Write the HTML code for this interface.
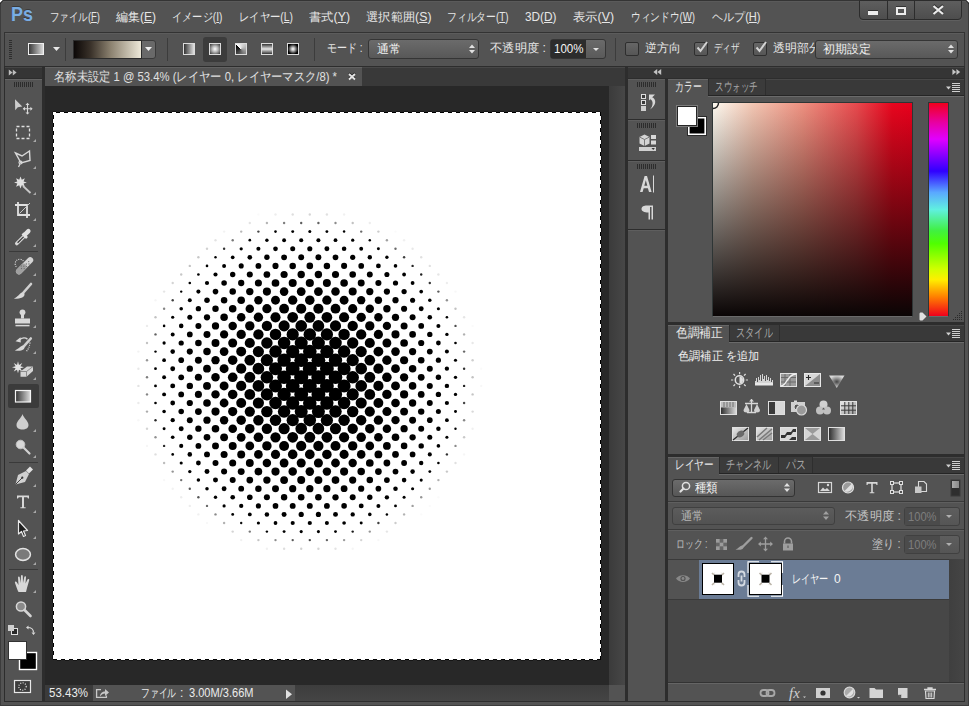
<!DOCTYPE html>
<html><head><meta charset="utf-8">
<style>
*{box-sizing:border-box;margin:0;padding:0}
html,body{width:969px;height:706px;overflow:hidden;background:#535353}
body{position:relative;font-family:"Liberation Sans",sans-serif;font-size:12px;color:#e6e6e6}
.a{position:absolute}
.t{position:absolute;white-space:nowrap;line-height:14px}
.u{text-decoration:underline}
</style></head><body>
<!-- window frame -->
<div class="a" style="left:0;top:0;width:969px;height:706px;background:#535353"></div>
<div class="a" style="left:0;top:0;width:1px;height:706px;background:#3c3c3c"></div>
<div class="a" style="left:968px;top:0;width:1px;height:706px;background:#3c3c3c"></div>
<div class="a" style="left:0;top:705px;width:969px;height:1px;background:#3c3c3c"></div>
<div class="a" style="left:0;top:0;width:969px;height:1px;background:#343434"></div>
<div class="a" style="left:2px;top:1px;width:965px;height:1px;background:#5a5a5a"></div>
<svg class="a" style="left:0;top:0" width="6" height="6"><path d="M0 0H3V1H2V2H1V3H0Z" fill="#fff"/><path d="M3 0.5H2.5V1.5H1.5V2.5H0.5V4" fill="none" stroke="#2a2a2a"/></svg>
<svg class="a" style="left:963px;top:0" width="6" height="6"><path d="M6 0H3V1H4V2H5V3H6Z" fill="#fff"/><path d="M3 0.5H3.5V1.5H4.5V2.5H5.5V4" fill="none" stroke="#2a2a2a"/></svg>

<!-- menu bar -->
<div class="t" style="left:11px;top:3px;font-size:21px;font-weight:bold;color:#79ade4;line-height:21px;text-shadow:0 -1px 0 #3a3a3a;transform:scaleX(0.8564);transform-origin:0 0">Ps</div>
<div class="t" style="left:50px;top:10px;transform:scaleX(0.7893);transform-origin:0 0">ファイル(<span class="u">F</span>)</div>
<div class="t" style="left:116px;top:10px;transform:scaleX(0.9996);transform-origin:0 0">編集(<span class="u">E</span>)</div>
<div class="t" style="left:172px;top:10px;transform:scaleX(0.8510);transform-origin:0 0">イメージ(<span class="u">I</span>)</div>
<div class="t" style="left:239px;top:10px;transform:scaleX(0.8614);transform-origin:0 0">レイヤー(<span class="u">L</span>)</div>
<div class="t" style="left:309px;top:10px;transform:scaleX(1.0246);transform-origin:0 0">書式(<span class="u">Y</span>)</div>
<div class="t" style="left:366px;top:10px;transform:scaleX(1.0232);transform-origin:0 0">選択範囲(<span class="u">S</span>)</div>
<div class="t" style="left:447px;top:10px;transform:scaleX(0.8163);transform-origin:0 0">フィルター(<span class="u">T</span>)</div>
<div class="t" style="left:525px;top:10px;transform:scaleX(0.9839);transform-origin:0 0">3D(<span class="u">D</span>)</div>
<div class="t" style="left:573px;top:10px;transform:scaleX(1.0246);transform-origin:0 0">表示(<span class="u">V</span>)</div>
<div class="t" style="left:631px;top:10px;transform:scaleX(0.8068);transform-origin:0 0">ウィンドウ(<span class="u">W</span>)</div>
<div class="t" style="left:712px;top:10px;transform:scaleX(0.9208);transform-origin:0 0">ヘルプ(<span class="u">H</span>)</div>


<!-- window buttons -->
<div class="a" style="left:859px;top:0px;width:103px;height:20px;border:1px solid #2c2c2c;border-radius:0 0 4px 4px;background:linear-gradient(#5e5e5e,#4d4d4d);box-shadow:0 1px 0 #5f5f5f"></div>
<div class="a" style="left:887px;top:0;width:1px;height:19px;background:#2c2c2c"></div>
<div class="a" style="left:914px;top:0;width:1px;height:19px;background:#2c2c2c"></div>
<div class="a" style="left:868px;top:11px;width:10px;height:4px;background:#ececec;box-shadow:0 -1px 0 #333"></div>
<div class="a" style="left:896px;top:7px;width:10px;height:8px;border:2px solid #ececec;box-shadow:0 -1px 0 #333"></div>
<svg class="a" style="left:931px;top:4px" width="14" height="11" viewBox="-0.5 -0.5 14 11"><path d="M2 1.5 L11.5 9.5 M11.5 1.5 L2 9.5" stroke="#333" stroke-width="2.4" transform="translate(0,-1)"/><path d="M2 1.5 L11.5 9.5 M11.5 1.5 L2 9.5" stroke="#ececec" stroke-width="2.2"/></svg>

<!-- options bar -->
<div class="a" style="left:4px;top:32px;width:961px;height:35px;background:#535353;border:1px solid #333"></div>
<div class="a" style="left:5px;top:33px;width:959px;height:1px;background:#5c5c5c"></div>
<!-- grip -->
<div class="a" style="left:9px;top:40px;width:3px;height:20px;background:repeating-linear-gradient(#2e2e2e 0 1px,transparent 1px 2px)"></div>
<!-- tool icon -->
<div class="a" style="left:28px;top:43px;width:16px;height:12px;border:1px solid #f0f0f0;background:linear-gradient(90deg,#3a3a3a,#d8d8d8)"></div>
<svg class="a" style="left:53px;top:47px" width="7" height="4"><path d="M0 0H7L3.5 4Z" fill="#e8e8e8"/></svg>
<div class="a" style="left:65px;top:38px;width:1px;height:23px;background:#3c3c3c"></div>
<!-- gradient swatch -->
<div class="a" style="left:73px;top:40px;width:83px;height:19px;border-radius:3px;background:#696969;border:1px solid #3a3a3a"></div>
<div class="a" style="left:73px;top:40px;width:69px;height:19px;border:1px solid #2c2c2c;background:linear-gradient(90deg,#0c0807,#3a322a 25%,#8c8270 55%,#ede8d8 100%)"></div>
<svg class="a" style="left:145px;top:47px" width="7" height="4"><path d="M0 0H7L3.5 4Z" fill="#f0f0f0"/></svg>
<div class="a" style="left:167px;top:38px;width:1px;height:23px;background:#3c3c3c"></div>
<!-- gradient type buttons -->
<div class="a" style="left:203px;top:37px;width:24px;height:25px;border-radius:3px;background:#3c3c3c"></div>
<div class="a" style="left:183px;top:43px;width:12px;height:12px;border:1px solid #dcdcdc;background:linear-gradient(90deg,#333,#e0e0e0)"></div>
<div class="a" style="left:209px;top:43px;width:12px;height:12px;border:1px solid #dcdcdc;background:radial-gradient(circle at 50% 50%,#fff 0,#bbb 40%,#333 100%)"></div>
<div class="a" style="left:235px;top:43px;width:12px;height:12px;border:1px solid #dcdcdc;background:conic-gradient(from 315deg,#fafafa,#c8c8c8 25%,#888 50%,#333 80%,#000)"></div>
<div class="a" style="left:261px;top:43px;width:12px;height:12px;border:1px solid #dcdcdc;background:linear-gradient(#333,#e8e8e8 50%,#333)"></div>
<div class="a" style="left:287px;top:43px;width:12px;height:12px;border:1px solid #dcdcdc;background:conic-gradient(from 45deg,#000,#000),radial-gradient(circle,#fff 0,#888 30%,#111 70%);background:radial-gradient(circle,#fff 0,#bbb 25%,#333 60%,#000 75%)"></div>
<div class="a" style="left:314px;top:38px;width:1px;height:23px;background:#3c3c3c"></div>
<!-- mode -->
<div class="t" style="left:327px;top:41px;transform:scaleX(0.8319);transform-origin:0 0">モード :</div>
<div class="a" style="left:368px;top:39px;width:111px;height:20px;border:1px solid #353535;border-radius:3px;background:linear-gradient(#6b6b6b,#585858)"></div>
<div class="t" style="left:377px;top:42px;color:#f0f0f0;transform:scaleX(1.0000);transform-origin:0 0">通常</div>
<svg class="a" style="left:469px;top:44px" width="6" height="10"><path d="M0 4L3 0.5L6 4ZM0 6L3 9.5L6 6Z" fill="#e0e0e0"/></svg>
<div class="t" style="left:490px;top:41px;transform:scaleX(1.0243);transform-origin:0 0">不透明度 :</div>
<div class="a" style="left:550px;top:39px;width:56px;height:20px;border:1px solid #353535;border-radius:3px;background:linear-gradient(#6a6a6a,#5a5a5a)"></div>
<div class="a" style="left:551px;top:40px;width:35px;height:18px;background:#2c2c2c"></div>
<div class="t" style="left:554px;top:42px;color:#f4f4f4;transform:scaleX(0.9608);transform-origin:0 0">100%</div>
<svg class="a" style="left:593px;top:48px" width="6" height="3"><path d="M0 0H6L3 3Z" fill="#e0e0e0"/></svg>
<div class="a" style="left:615px;top:38px;width:1px;height:23px;background:#3c3c3c"></div>
<!-- checkboxes -->
<div class="a" style="left:625px;top:42px;width:14px;height:14px;border:1px solid #2e2e2e;border-radius:2px;background:linear-gradient(#666,#565656)"></div>
<div class="t" style="left:645px;top:41px;transform:scaleX(0.9861);transform-origin:0 0">逆方向</div>
<div class="a" style="left:694px;top:42px;width:14px;height:14px;border:1px solid #2e2e2e;border-radius:2px;background:linear-gradient(#666,#565656)"></div>
<svg class="a" style="left:695px;top:40px" width="14" height="14"><path d="M2.5 7.5L5.5 11L12 2" fill="none" stroke="#d4d4d4" stroke-width="2"/></svg>
<div class="t" style="left:714px;top:41px;transform:scaleX(0.7083);transform-origin:0 0">ディザ</div>
<div class="a" style="left:753px;top:42px;width:14px;height:14px;border:1px solid #2e2e2e;border-radius:2px;background:linear-gradient(#666,#565656)"></div>
<svg class="a" style="left:754px;top:40px" width="14" height="14"><path d="M2.5 7.5L5.5 11L12 2" fill="none" stroke="#d4d4d4" stroke-width="2"/></svg>
<div class="a" style="left:773px;top:38px;width:42px;height:22px;overflow:hidden"><div class="t" style="left:0;top:3px">透明部分</div></div>
<div class="a" style="left:815px;top:40px;width:143px;height:19px;border:1px solid #353535;border-radius:3px;background:linear-gradient(#6b6b6b,#585858)"></div>
<div class="t" style="left:823px;top:42px;color:#f0f0f0;transform:scaleX(1.0000);transform-origin:0 0">初期設定</div>
<svg class="a" style="left:948px;top:44px" width="6" height="10"><path d="M0 4L3 0.5L6 4ZM0 6L3 9.5L6 6Z" fill="#e0e0e0"/></svg>

<!-- left toolbar -->
<div class="a" style="left:4px;top:66px;width:40px;height:636px;background:#2d2d2d"></div>
<div class="a" style="left:5px;top:67px;width:37px;height:11px;background:#353535;border-top:1px solid #454545"></div>
<div class="a" style="left:5px;top:79px;width:37px;height:622px;background:#535353;border-top:1px solid #656565"></div>
<svg class="a" style="left:0;top:0" width="45" height="706">
<g fill="#bdbdbd"><path d="M8.8 69.5L12.6 72.5L8.8 75.5Z M12.8 69.5L16.6 72.5L12.8 75.5Z"/></g>
<g fill="#2c2c2c"><path d="M14 82h1v5h-1zM16 82h1v5h-1zM18 82h1v5h-1zM20 82h1v5h-1zM22 82h1v5h-1zM24 82h1v5h-1zM26 82h1v5h-1zM28 82h1v5h-1zM30 82h1v5h-1zM32 82h1v5h-1z"/></g>
<!-- tiny triangles -->
<g fill="#a8a8a8">
<path d="M36 139v3h-3z"/><path d="M36 166v3h-3z"/><path d="M36 192v3h-3z"/><path d="M36 218v3h-3z"/><path d="M36 244v3h-3z"/>
<path d="M36 273v3h-3z"/><path d="M36 299v3h-3z"/><path d="M36 325v3h-3z"/><path d="M36 351v3h-3z"/><path d="M36 377v3h-3z"/>
<path d="M36 403v3h-3z"/><path d="M36 429v3h-3z"/><path d="M36 455v3h-3z"/><path d="M36 484v3h-3z"/><path d="M36 510v3h-3z"/>
<path d="M36 536v3h-3z"/><path d="M36 562v3h-3z"/><path d="M36 590v3h-3z"/>
</g>
<!-- separators -->
<g fill="#3a3a3a"><rect x="9" y="251" width="29" height="1"/><rect x="9" y="462" width="29" height="1"/><rect x="9" y="569" width="29" height="1"/></g>
<!-- move -->
<path d="M15 99.3L22.3 106.6L17.8 107.2L15.2 110.2Z" fill="#cdcdcd"/>
<path d="M27.5 104.5v8.5M23.2 108.7h8.5" stroke="#d8d8d8" stroke-width="1.1"/>
<path d="M27.5 102.8l-2 2.2h4zM27.5 114.6l-2-2.2h4zM22.8 108.7l2.2-2v4zM32.6 108.7l-2.2-2v4z" fill="#d8d8d8"/>
<!-- marquee -->
<rect x="16.5" y="126.5" width="13" height="12" fill="none" stroke="#e0e0e0" stroke-width="1.3" stroke-dasharray="3 2"/>
<!-- lasso -->
<path d="M15.5 153 L22 156 L29.5 151 L30 160.5 L21 163 Z" fill="none" stroke="#d8d8d8" stroke-width="1.4"/>
<circle cx="20.5" cy="162.5" r="1.5" fill="none" stroke="#d8d8d8" stroke-width="1.2"/>
<path d="M20 164l-1.5 3" stroke="#d8d8d8" stroke-width="1.2"/>
<!-- magic wand -->
<path d="M20.5 176.5l1.3 3.2 3-1.4-1.2 3.2 3.3 1-3.3 1.1 1.2 3.1-3-1.4-1.3 3.3-1.3-3.3-3.1 1.4 1.2-3.1-3.3-1.1 3.3-1-1.2-3.2 3.1 1.4z" fill="#e0e0e0"/>
<path d="M23 186 L30.5 193" stroke="#c8c8c8" stroke-width="1.8"/>
<!-- crop -->
<path d="M18 202v13h12M15 205h12v13" fill="none" stroke="#e0e0e0" stroke-width="1.8"/>
<path d="M19.5 213.5L30 203" stroke="#c8c8c8" stroke-width="1"/>
<!-- eyedropper -->
<path d="M16.8 243.6l7.6-7.6" stroke="#d8d8d8" stroke-width="3.6" stroke-linecap="round"/>
<path d="M17.6 242.8l6.2-6.2" stroke="#3c3c3c" stroke-width="1.3"/>
<path d="M22.5 233.5l4.5 4.5" stroke="#e0e0e0" stroke-width="2.6"/>
<path d="M25 234.5l3.4-3.4" stroke="#e0e0e0" stroke-width="4.4" stroke-linecap="round"/>
<!-- healing -->
<path d="M16.3 266.7 A4.5 4.5 0 1 1 23.4 261.2" fill="none" stroke="#f0f0f0" stroke-width="1.1" stroke-dasharray="0.9 1.3"/>
<path d="M19 271.3 L30.2 260.2" stroke="#d4d4d4" stroke-width="6" stroke-linecap="round"/>
<path d="M19 271.3 L23.5 266.8" stroke="#a0a0a0" stroke-width="6" stroke-linecap="round"/>
<g fill="#6e6e6e"><circle cx="21.5" cy="268.5" r=".65"/><circle cx="23.8" cy="266.2" r=".65"/><circle cx="24.2" cy="268.6" r=".65"/><circle cx="26.3" cy="264" r=".65"/><circle cx="26.6" cy="266.3" r=".65"/><circle cx="28.7" cy="261.6" r=".65"/><circle cx="29" cy="264" r=".65"/><circle cx="21.2" cy="266" r=".65"/></g>
<!-- brush -->
<path d="M23.5 292.5 L31 284" stroke="#d0d0d0" stroke-width="2.6" stroke-linecap="round"/>
<path d="M13.8 298.4 C17.5 297.5 19.5 293.2 22.3 292.2 C24.8 292 25.2 295 23.6 296.6 C21.5 298.6 17.5 299 13.8 298.4Z" fill="#d8d8d8"/>
<!-- stamp -->
<circle cx="22.5" cy="312.3" r="2.9" fill="#d8d8d8"/>
<path d="M21 313h3v5.5h-3z" fill="#d8d8d8"/>
<path d="M15 318.5h15v5h-15z" fill="#d8d8d8"/>
<path d="M15.5 325.6h14" stroke="#d8d8d8" stroke-width="1.5"/>
<!-- history brush -->
<path d="M19 340.2 C22 337.5 25.5 337.5 27.5 339.2" fill="none" stroke="#d8d8d8" stroke-width="1.5"/>
<path d="M15.5 341.2 L20.5 337.2 L20.8 342.5Z" fill="#d8d8d8"/>
<path d="M23.8 346.3 L30.8 338.5" stroke="#d0d0d0" stroke-width="2.6" stroke-linecap="round"/>
<path d="M14.8 350.4 C18 349.6 20 346.4 22.6 345.6 C24.8 345.5 25 348.4 23.4 349.6 C21.2 351 18 351.2 14.8 350.4Z" fill="#d8d8d8"/>
<path d="M30 342.5 C29.5 346.5 28.5 349 26.5 351.2" fill="none" stroke="#f0f0f0" stroke-width="1.1" stroke-dasharray="1 1.1"/>
<!-- eraser -->
<path d="M18.00 361.30 L18.99 364.90 L22.24 363.06 L20.40 366.31 L24.00 367.30 L20.40 368.29 L22.24 371.54 L18.99 369.70 L18.00 373.30 L17.01 369.70 L13.76 371.54 L15.60 368.29 L12.00 367.30 L15.60 366.31 L13.76 363.06 L17.01 364.90Z" fill="#e4e4e4"/>
<path d="M20.5 371.5 L27 366.5 L33 366.5 L33 371 L26.5 376.8 L20.5 376.8Z" fill="#d4d4d4"/>
<path d="M20.5 371.5 L26.5 371.5 L33 366.5 M26.5 371.5 V376.8" fill="none" stroke="#7a7a7a" stroke-width=".8"/>
<!-- gradient selected -->
<rect x="8" y="384" width="31" height="24" rx="2" fill="#3b3b3b"/>
<rect x="15.5" y="390.5" width="15" height="11.5" fill="url(#tg)" stroke="#f4f4f4" stroke-width="1.2"/>
<defs><linearGradient id="tg"><stop offset="0" stop-color="#333"/><stop offset="1" stop-color="#ddd"/></linearGradient>
<radialGradient id="rg1" cx=".5" cy=".4" r=".6"><stop offset="0" stop-color="#777"/><stop offset="1" stop-color="#d4d4d4"/></radialGradient></defs>
<!-- blur drop -->
<path d="M22.5 414 C23.5 418 28.5 421 28.5 425 C28.5 428 26 429.5 22.5 429.5 C19 429.5 16.5 428 16.5 425 C16.5 421 21.5 418 22.5 414Z" fill="#cfcfcf"/>
<!-- dodge -->
<circle cx="20.5" cy="444.5" r="4.3" fill="#d8d8d8" stroke="#c0c0c0"/>
<path d="M23.5 447.5 L29.5 453.5" stroke="#d0d0d0" stroke-width="2.2" stroke-linecap="round"/>
<!-- pen -->
<path d="M15.5 484.5 L18 475 L26 471 L29 474 L25 482 Z" fill="#d0d0d0"/>
<path d="M26 470.5 L30 466.5 L33 469.5 L29 473.5Z" fill="#e0e0e0"/>
<path d="M15.5 484.5 L22 478" stroke="#444" stroke-width="1"/>
<circle cx="22.3" cy="477.7" r="1.1" fill="#333"/>
<!-- type -->
<path d="M17 495.5h12v3h-1l-.7-1.2h-3.3v10h1.6v1h-5.2v-1h1.6v-10h-3.3l-.7 1.2h-1z" fill="#d8d8d8"/>
<!-- path select -->
<path d="M18.5 520.5 L18.5 534 L21.5 531.5 L23.5 536.5 L25.5 535.5 L23.5 531 L27.5 530.5Z" fill="#1e1e1e" stroke="#e8e8e8" stroke-width="1.2" stroke-linejoin="round"/>
<!-- ellipse -->
<ellipse cx="23" cy="554.5" rx="7.5" ry="6" fill="url(#rg1)" stroke="#e4e4e4" stroke-width="1.3"/>
<ellipse cx="23" cy="554.5" rx="6.5" ry="5" fill="#7a7a7a"/>
<!-- hand -->
<path d="M17.5 590 L15 583 C14.5 581.5 16 581 16.8 582.2 L18.5 585 L18 577.5 C18 576.3 19.6 576.3 19.8 577.5 L20.5 583 L21 576 C21 574.8 22.8 574.8 22.8 576 L23 583 L24.3 577 C24.5 575.8 26.2 576 26 577.2 L25.5 583.5 L27.5 579.5 C28 578.5 29.6 579 29.2 580.2 L27 588 L26 592 L18.5 592 Z" fill="#d8d8d8"/>
<!-- zoom -->
<circle cx="21" cy="606.5" r="4.6" fill="#8a8a8a" stroke="#d8d8d8" stroke-width="1.5"/>
<path d="M24.5 610 L30.5 616" stroke="#d4d4d4" stroke-width="2.6" stroke-linecap="round"/>
<!-- default colours -->
<rect x="11.5" y="628.5" width="6" height="6" fill="#2a2a2a" stroke="#e0e0e0"/>
<rect x="8" y="625" width="6" height="6" fill="#cfcfcf"/>
<!-- swap -->
<path d="M27.5 627.5 C31 627.5 33.5 629 33.5 632.5" fill="none" stroke="#d8d8d8" stroke-width="1.2"/>
<path d="M26 627.5 L28.5 625.5 L28.5 629.5Z M33.5 635 L31.5 632.5 L35.5 632.5Z" fill="#d8d8d8"/>
<!-- fg/bg -->
<rect x="19.5" y="652.5" width="17" height="17" fill="#000" stroke="#fff" stroke-width="1.4"/>
<rect x="8.5" y="641.5" width="18" height="18" fill="#fff" stroke="#333" stroke-width="1"/>
<!-- quick mask -->
<rect x="14.5" y="680.5" width="16" height="12" fill="#3d3d3d" stroke="#e8e8e8" stroke-width="1.2"/>
<circle cx="22.5" cy="686.5" r="3.7" fill="none" stroke="#f4f4f4" stroke-width="1.1" stroke-dasharray="1 1.45"/>
</svg>

<!-- document area -->
<div class="a" style="left:44px;top:66px;width:584px;height:636px;background:#2d2d2d"></div>
<div class="a" style="left:45px;top:67px;width:580px;height:19px;background:#393939;border-top:1px solid #474747"></div>
<div class="a" style="left:45px;top:67px;width:317px;height:19px;background:#535353;border-top:1px solid #626262"></div>
<div class="t" style="left:54px;top:70px;font-size:13px;color:#e0e0e0;transform:scaleX(0.8681);transform-origin:0 0">名称未設定 1 @ 53.4% (レイヤー 0, レイヤーマスク/8) *</div>
<svg class="a" style="left:347px;top:72px" width="10" height="9"><path d="M2 2L8 7.5M8 2L2 7.5" stroke="#1e1e1e" stroke-width="2.2" transform="translate(0,-0.8)"/><path d="M2 2L8 7.5M8 2L2 7.5" stroke="#e6e6e6" stroke-width="1.8"/></svg>
<div class="a" style="left:45px;top:86px;width:564px;height:599px;background:#282828"></div>
<div class="a" style="left:609px;top:86px;width:16px;height:599px;background:linear-gradient(90deg,#3b3b3b,#474747)"></div>
<div class="a" style="left:45px;top:685px;width:564px;height:16px;background:linear-gradient(#3d3d3d,#454545)"></div>
<div class="a" style="left:609px;top:685px;width:16px;height:16px;background:#535353"></div>
<!-- status bar -->
<div class="a" style="left:45px;top:685px;width:48px;height:16px;background:#3b3b3b"></div>
<div class="a" style="left:93px;top:685px;width:202px;height:16px;background:#535353"></div>
<div class="t" style="left:49px;top:686px;color:#ececec;font-size:12px;transform:scaleX(0.9582);transform-origin:0 0">53.43%</div>
<svg class="a" style="left:95px;top:687px" width="15" height="12"><path d="M6 2.6H1.6V10.4H11.4V8.5" fill="none" stroke="#c8c8c8" stroke-width="1.3"/><path d="M5 9.5C5 6 7.5 4.5 10 4.5V2L14 5.5L10 9V6.5C8 6.5 6.5 7.5 5 9.5Z" fill="#c8c8c8"/></svg>
<div class="t" style="left:141px;top:686px;color:#ececec;font-size:12px;transform:scaleX(0.7292);transform-origin:0 0">ファイル</div><div class="t" style="left:180px;top:686px;color:#ececec;font-size:12px">:</div><div class="t" style="left:189px;top:686px;color:#ececec;font-size:12px;transform:scaleX(0.9208);transform-origin:0 0">3.00M/3.66M</div>
<svg class="a" style="left:285px;top:689px" width="8" height="11"><path d="M1 0.5L7 5.2L1 10Z" fill="#e0e0e0"/></svg>
<!-- canvas -->
<svg class="a" style="left:0;top:0" width="969" height="706">
<rect x="53" y="112" width="548" height="548" fill="#fff"/>
<g fill="#000"><circle cx="138.4" cy="351.6" r="1.2" fill-opacity="0.05"/><circle cx="138.4" cy="368.7" r="1.2" fill-opacity="0.09"/><circle cx="138.4" cy="385.9" r="1.2" fill-opacity="0.11"/><circle cx="138.4" cy="403.0" r="1.2" fill-opacity="0.08"/><circle cx="138.4" cy="420.2" r="1.2" fill-opacity="0.03"/><circle cx="147.0" cy="325.9" r="1.2" fill-opacity="0.08"/><circle cx="147.0" cy="343.0" r="1.2" fill-opacity="0.24"/><circle cx="147.0" cy="360.2" r="1.2" fill-opacity="0.41"/><circle cx="147.0" cy="377.3" r="1.2" fill-opacity="0.51"/><circle cx="147.0" cy="394.4" r="1.2" fill-opacity="0.48"/><circle cx="147.0" cy="411.6" r="1.2" fill-opacity="0.33"/><circle cx="147.0" cy="428.7" r="1.2" fill-opacity="0.17"/><circle cx="147.0" cy="445.9" r="1.2" fill-opacity="0.04"/><circle cx="155.5" cy="300.2" r="1.2" fill-opacity="0.04"/><circle cx="155.5" cy="317.3" r="1.2" fill-opacity="0.24"/><circle cx="155.5" cy="334.4" r="1.2" fill-opacity="0.62"/><circle cx="155.5" cy="351.6" r="1.22"/><circle cx="155.5" cy="368.7" r="1.38"/><circle cx="155.5" cy="385.9" r="1.41"/><circle cx="155.5" cy="403.0" r="1.32"/><circle cx="155.5" cy="420.2" r="1.2" fill-opacity="0.85"/><circle cx="155.5" cy="437.3" r="1.2" fill-opacity="0.43"/><circle cx="155.5" cy="454.4" r="1.2" fill-opacity="0.13"/><circle cx="164.1" cy="291.6" r="1.2" fill-opacity="0.10"/><circle cx="164.1" cy="308.7" r="1.2" fill-opacity="0.48"/><circle cx="164.1" cy="325.9" r="1.28"/><circle cx="164.1" cy="343.0" r="1.63"/><circle cx="164.1" cy="360.2" r="1.86"/><circle cx="164.1" cy="377.3" r="1.95"/><circle cx="164.1" cy="394.4" r="1.93"/><circle cx="164.1" cy="411.6" r="1.77"/><circle cx="164.1" cy="428.7" r="1.49"/><circle cx="164.1" cy="445.9" r="1.2" fill-opacity="0.83"/><circle cx="164.1" cy="463.0" r="1.2" fill-opacity="0.26"/><circle cx="164.1" cy="480.1" r="1.2" fill-opacity="0.03"/><circle cx="172.7" cy="283.0" r="1.2" fill-opacity="0.17"/><circle cx="172.7" cy="300.2" r="1.2" fill-opacity="0.75"/><circle cx="172.7" cy="317.3" r="1.57"/><circle cx="172.7" cy="334.4" r="1.99"/><circle cx="172.7" cy="351.6" r="2.28"/><circle cx="172.7" cy="368.7" r="2.44"/><circle cx="172.7" cy="385.9" r="2.47"/><circle cx="172.7" cy="403.0" r="2.38"/><circle cx="172.7" cy="420.2" r="2.16"/><circle cx="172.7" cy="437.3" r="1.82"/><circle cx="172.7" cy="454.4" r="1.34"/><circle cx="172.7" cy="471.6" r="1.2" fill-opacity="0.42"/><circle cx="172.7" cy="488.7" r="1.2" fill-opacity="0.05"/><circle cx="181.2" cy="274.5" r="1.2" fill-opacity="0.22"/><circle cx="181.2" cy="291.6" r="1.2" fill-opacity="1.00"/><circle cx="181.2" cy="308.7" r="1.80"/><circle cx="181.2" cy="325.9" r="2.28"/><circle cx="181.2" cy="343.0" r="2.62"/><circle cx="181.2" cy="360.2" r="2.83"/><circle cx="181.2" cy="377.3" r="2.89"/><circle cx="181.2" cy="394.4" r="2.87"/><circle cx="181.2" cy="411.6" r="2.76"/><circle cx="181.2" cy="428.7" r="2.48"/><circle cx="181.2" cy="445.9" r="2.08"/><circle cx="181.2" cy="463.0" r="1.54"/><circle cx="181.2" cy="480.1" r="1.2" fill-opacity="0.56"/><circle cx="181.2" cy="497.3" r="1.2" fill-opacity="0.07"/><circle cx="189.8" cy="265.9" r="1.2" fill-opacity="0.24"/><circle cx="189.8" cy="283.0" r="1.30"/><circle cx="189.8" cy="300.2" r="1.96"/><circle cx="189.8" cy="317.3" r="2.50"/><circle cx="189.8" cy="334.4" r="2.87"/><circle cx="189.8" cy="351.6" r="3.05"/><circle cx="189.8" cy="368.7" r="3.17"/><circle cx="189.8" cy="385.9" r="3.20"/><circle cx="189.8" cy="403.0" r="3.12"/><circle cx="189.8" cy="420.2" r="2.98"/><circle cx="189.8" cy="437.3" r="2.74"/><circle cx="189.8" cy="454.4" r="2.28"/><circle cx="189.8" cy="471.6" r="1.68"/><circle cx="189.8" cy="488.7" r="1.2" fill-opacity="0.65"/><circle cx="189.8" cy="505.9" r="1.2" fill-opacity="0.07"/><circle cx="198.4" cy="257.3" r="1.2" fill-opacity="0.22"/><circle cx="198.4" cy="274.5" r="1.33"/><circle cx="198.4" cy="291.6" r="2.06"/><circle cx="198.4" cy="308.7" r="2.66"/><circle cx="198.4" cy="325.9" r="3.01"/><circle cx="198.4" cy="343.0" r="3.28"/><circle cx="198.4" cy="360.2" r="3.48"/><circle cx="198.4" cy="377.3" r="3.57"/><circle cx="198.4" cy="394.4" r="3.54"/><circle cx="198.4" cy="411.6" r="3.40"/><circle cx="198.4" cy="428.7" r="3.16"/><circle cx="198.4" cy="445.9" r="2.89"/><circle cx="198.4" cy="463.0" r="2.41"/><circle cx="198.4" cy="480.1" r="1.75"/><circle cx="198.4" cy="497.3" r="1.2" fill-opacity="0.66"/><circle cx="198.4" cy="514.4" r="1.2" fill-opacity="0.06"/><circle cx="207.0" cy="248.8" r="1.2" fill-opacity="0.18"/><circle cx="207.0" cy="265.9" r="1.31"/><circle cx="207.0" cy="283.0" r="2.10"/><circle cx="207.0" cy="300.2" r="2.76"/><circle cx="207.0" cy="317.3" r="3.12"/><circle cx="207.0" cy="334.4" r="3.49"/><circle cx="207.0" cy="351.6" r="3.75"/><circle cx="207.0" cy="368.7" r="3.89"/><circle cx="207.0" cy="385.9" r="3.92"/><circle cx="207.0" cy="403.0" r="3.83"/><circle cx="207.0" cy="420.2" r="3.63"/><circle cx="207.0" cy="437.3" r="3.33"/><circle cx="207.0" cy="454.4" r="2.97"/><circle cx="207.0" cy="471.6" r="2.48"/><circle cx="207.0" cy="488.7" r="1.76"/><circle cx="207.0" cy="505.9" r="1.2" fill-opacity="0.59"/><circle cx="207.0" cy="523.0" r="1.2" fill-opacity="0.03"/><circle cx="215.5" cy="240.2" r="1.2" fill-opacity="0.11"/><circle cx="215.5" cy="257.3" r="1.22"/><circle cx="215.5" cy="274.5" r="2.07"/><circle cx="215.5" cy="291.6" r="2.80"/><circle cx="215.5" cy="308.7" r="3.21"/><circle cx="215.5" cy="325.9" r="3.65"/><circle cx="215.5" cy="343.0" r="3.97"/><circle cx="215.5" cy="360.2" r="4.16"/><circle cx="215.5" cy="377.3" r="4.23"/><circle cx="215.5" cy="394.4" r="4.20"/><circle cx="215.5" cy="411.6" r="4.05"/><circle cx="215.5" cy="428.7" r="3.80"/><circle cx="215.5" cy="445.9" r="3.45"/><circle cx="215.5" cy="463.0" r="3.01"/><circle cx="215.5" cy="480.1" r="2.49"/><circle cx="215.5" cy="497.3" r="1.70"/><circle cx="215.5" cy="514.4" r="1.2" fill-opacity="0.46"/><circle cx="224.1" cy="231.6" r="1.2" fill-opacity="0.05"/><circle cx="224.1" cy="248.8" r="1.2" fill-opacity="0.80"/><circle cx="224.1" cy="265.9" r="1.99"/><circle cx="224.1" cy="283.0" r="2.78"/><circle cx="224.1" cy="300.2" r="3.25"/><circle cx="224.1" cy="317.3" r="3.75"/><circle cx="224.1" cy="334.4" r="4.13"/><circle cx="224.1" cy="351.6" r="4.35"/><circle cx="224.1" cy="368.7" r="4.47"/><circle cx="224.1" cy="385.9" r="4.49"/><circle cx="224.1" cy="403.0" r="4.40"/><circle cx="224.1" cy="420.2" r="4.22"/><circle cx="224.1" cy="437.3" r="3.92"/><circle cx="224.1" cy="454.4" r="3.51"/><circle cx="224.1" cy="471.6" r="3.02"/><circle cx="224.1" cy="488.7" r="2.44"/><circle cx="224.1" cy="505.9" r="1.59"/><circle cx="224.1" cy="523.0" r="1.2" fill-opacity="0.30"/><circle cx="232.7" cy="240.2" r="1.2" fill-opacity="0.53"/><circle cx="232.7" cy="257.3" r="1.84"/><circle cx="232.7" cy="274.5" r="2.69"/><circle cx="232.7" cy="291.6" r="3.23"/><circle cx="232.7" cy="308.7" r="3.79"/><circle cx="232.7" cy="325.9" r="4.23"/><circle cx="232.7" cy="343.0" r="4.51"/><circle cx="232.7" cy="360.2" r="4.74"/><circle cx="232.7" cy="377.3" r="4.82"/><circle cx="232.7" cy="394.4" r="4.76"/><circle cx="232.7" cy="411.6" r="4.58"/><circle cx="232.7" cy="428.7" r="4.32"/><circle cx="232.7" cy="445.9" r="3.98"/><circle cx="232.7" cy="463.0" r="3.51"/><circle cx="232.7" cy="480.1" r="2.99"/><circle cx="232.7" cy="497.3" r="2.32"/><circle cx="232.7" cy="514.4" r="1.41"/><circle cx="232.7" cy="531.6" r="1.2" fill-opacity="0.17"/><circle cx="241.2" cy="231.6" r="1.2" fill-opacity="0.28"/><circle cx="241.2" cy="248.8" r="1.62"/><circle cx="241.2" cy="265.9" r="2.54"/><circle cx="241.2" cy="283.0" r="3.15"/><circle cx="241.2" cy="300.2" r="3.78"/><circle cx="241.2" cy="317.3" r="4.27"/><circle cx="241.2" cy="334.4" r="4.64"/><circle cx="241.2" cy="351.6" r="4.95"/><circle cx="241.2" cy="368.7" r="5.11"/><circle cx="241.2" cy="385.9" r="5.11"/><circle cx="241.2" cy="403.0" r="4.97"/><circle cx="241.2" cy="420.2" r="4.71"/><circle cx="241.2" cy="437.3" r="4.37"/><circle cx="241.2" cy="454.4" r="3.98"/><circle cx="241.2" cy="471.6" r="3.47"/><circle cx="241.2" cy="488.7" r="2.91"/><circle cx="241.2" cy="505.9" r="2.14"/><circle cx="241.2" cy="523.0" r="1.2" fill-opacity="0.95"/><circle cx="241.2" cy="540.1" r="1.2" fill-opacity="0.06"/><circle cx="249.8" cy="223.0" r="1.2" fill-opacity="0.11"/><circle cx="249.8" cy="240.2" r="1.34"/><circle cx="249.8" cy="257.3" r="2.33"/><circle cx="249.8" cy="274.5" r="3.03"/><circle cx="249.8" cy="291.6" r="3.69"/><circle cx="249.8" cy="308.7" r="4.26"/><circle cx="249.8" cy="325.9" r="4.70"/><circle cx="249.8" cy="343.0" r="5.09"/><circle cx="249.8" cy="360.2" r="5.36"/><circle cx="249.8" cy="377.3" r="5.45"/><circle cx="249.8" cy="394.4" r="5.36"/><circle cx="249.8" cy="411.6" r="5.12"/><circle cx="249.8" cy="428.7" r="4.78"/><circle cx="249.8" cy="445.9" r="4.37"/><circle cx="249.8" cy="463.0" r="3.94"/><circle cx="249.8" cy="480.1" r="3.37"/><circle cx="249.8" cy="497.3" r="2.80"/><circle cx="249.8" cy="514.4" r="1.90"/><circle cx="249.8" cy="531.6" r="1.2" fill-opacity="0.53"/><circle cx="258.4" cy="214.5" r="1.2" fill-opacity="0.02"/><circle cx="258.4" cy="231.6" r="1.2" fill-opacity="0.71"/><circle cx="258.4" cy="248.8" r="2.04"/><circle cx="258.4" cy="265.9" r="2.90"/><circle cx="258.4" cy="283.0" r="3.55"/><circle cx="258.4" cy="300.2" r="4.19"/><circle cx="258.4" cy="317.3" r="4.70"/><circle cx="258.4" cy="334.4" r="5.17"/><circle cx="258.4" cy="351.6" r="5.58"/><circle cx="258.4" cy="368.7" r="5.84"/><circle cx="258.4" cy="385.9" r="5.84"/><circle cx="258.4" cy="403.0" r="5.58"/><circle cx="258.4" cy="420.2" r="5.20"/><circle cx="258.4" cy="437.3" r="4.78"/><circle cx="258.4" cy="454.4" r="4.33"/><circle cx="258.4" cy="471.6" r="3.84"/><circle cx="258.4" cy="488.7" r="3.21"/><circle cx="258.4" cy="505.9" r="2.56"/><circle cx="258.4" cy="523.0" r="1.59"/><circle cx="258.4" cy="540.1" r="1.2" fill-opacity="0.23"/><circle cx="266.9" cy="223.0" r="1.2" fill-opacity="0.29"/><circle cx="266.9" cy="240.2" r="1.70"/><circle cx="266.9" cy="257.3" r="2.68"/><circle cx="266.9" cy="274.5" r="3.35"/><circle cx="266.9" cy="291.6" r="4.05"/><circle cx="266.9" cy="308.7" r="4.61"/><circle cx="266.9" cy="325.9" r="5.17"/><circle cx="266.9" cy="343.0" r="5.71"/><circle cx="266.9" cy="360.2" r="6.11"/><circle cx="266.9" cy="377.3" r="6.25"/><circle cx="266.9" cy="394.4" r="6.11"/><circle cx="266.9" cy="411.6" r="5.71"/><circle cx="266.9" cy="428.7" r="5.20"/><circle cx="266.9" cy="445.9" r="4.72"/><circle cx="266.9" cy="463.0" r="4.24"/><circle cx="266.9" cy="480.1" r="3.68"/><circle cx="266.9" cy="497.3" r="3.03"/><circle cx="266.9" cy="514.4" r="2.26"/><circle cx="266.9" cy="531.6" r="1.22"/><circle cx="266.9" cy="548.7" r="1.2" fill-opacity="0.06"/><circle cx="275.5" cy="214.5" r="1.2" fill-opacity="0.07"/><circle cx="275.5" cy="231.6" r="1.30"/><circle cx="275.5" cy="248.8" r="2.35"/><circle cx="275.5" cy="265.9" r="3.09"/><circle cx="275.5" cy="283.0" r="3.86"/><circle cx="275.5" cy="300.2" r="4.46"/><circle cx="275.5" cy="317.3" r="5.08"/><circle cx="275.5" cy="334.4" r="5.71"/><circle cx="275.5" cy="351.6" r="6.25"/><circle cx="275.5" cy="368.7" r="6.51"/><circle cx="275.5" cy="385.9" r="6.51"/><circle cx="275.5" cy="403.0" r="6.25"/><circle cx="275.5" cy="420.2" r="5.71"/><circle cx="275.5" cy="437.3" r="5.13"/><circle cx="275.5" cy="454.4" r="4.59"/><circle cx="275.5" cy="471.6" r="4.09"/><circle cx="275.5" cy="488.7" r="3.47"/><circle cx="275.5" cy="505.9" r="2.84"/><circle cx="275.5" cy="523.0" r="1.89"/><circle cx="275.5" cy="540.1" r="1.2" fill-opacity="0.45"/><circle cx="284.1" cy="223.0" r="1.2" fill-opacity="0.50"/><circle cx="284.1" cy="240.2" r="1.94"/><circle cx="284.1" cy="257.3" r="2.87"/><circle cx="284.1" cy="274.5" r="3.58"/><circle cx="284.1" cy="291.6" r="4.28"/><circle cx="284.1" cy="308.7" r="4.91"/><circle cx="284.1" cy="325.9" r="5.58"/><circle cx="284.1" cy="343.0" r="6.25"/><circle cx="284.1" cy="360.2" r="6.64"/><circle cx="284.1" cy="377.3" r="6.78"/><circle cx="284.1" cy="394.4" r="6.64"/><circle cx="284.1" cy="411.6" r="6.25"/><circle cx="284.1" cy="428.7" r="5.58"/><circle cx="284.1" cy="445.9" r="4.98"/><circle cx="284.1" cy="463.0" r="4.42"/><circle cx="284.1" cy="480.1" r="3.89"/><circle cx="284.1" cy="497.3" r="3.21"/><circle cx="284.1" cy="514.4" r="2.49"/><circle cx="284.1" cy="531.6" r="1.45"/><circle cx="284.1" cy="548.7" r="1.2" fill-opacity="0.13"/><circle cx="292.7" cy="214.5" r="1.2" fill-opacity="0.13"/><circle cx="292.7" cy="231.6" r="1.47"/><circle cx="292.7" cy="248.8" r="2.51"/><circle cx="292.7" cy="265.9" r="3.25"/><circle cx="292.7" cy="283.0" r="4.03"/><circle cx="292.7" cy="300.2" r="4.67"/><circle cx="292.7" cy="317.3" r="5.35"/><circle cx="292.7" cy="334.4" r="6.11"/><circle cx="292.7" cy="351.6" r="6.64"/><circle cx="292.7" cy="368.7" r="6.91"/><circle cx="292.7" cy="385.9" r="6.91"/><circle cx="292.7" cy="403.0" r="6.64"/><circle cx="292.7" cy="420.2" r="6.11"/><circle cx="292.7" cy="437.3" r="5.37"/><circle cx="292.7" cy="454.4" r="4.78"/><circle cx="292.7" cy="471.6" r="4.24"/><circle cx="292.7" cy="488.7" r="3.62"/><circle cx="292.7" cy="505.9" r="2.94"/><circle cx="292.7" cy="523.0" r="2.06"/><circle cx="292.7" cy="540.1" r="1.2" fill-opacity="0.65"/><circle cx="301.2" cy="223.0" r="1.2" fill-opacity="0.63"/><circle cx="301.2" cy="240.2" r="2.05"/><circle cx="301.2" cy="257.3" r="2.94"/><circle cx="301.2" cy="274.5" r="3.70"/><circle cx="301.2" cy="291.6" r="4.39"/><circle cx="301.2" cy="308.7" r="5.07"/><circle cx="301.2" cy="325.9" r="5.84"/><circle cx="301.2" cy="343.0" r="6.51"/><circle cx="301.2" cy="360.2" r="6.91"/><circle cx="301.2" cy="377.3" r="7.01"/><circle cx="301.2" cy="394.4" r="6.91"/><circle cx="301.2" cy="411.6" r="6.51"/><circle cx="301.2" cy="428.7" r="5.84"/><circle cx="301.2" cy="445.9" r="5.13"/><circle cx="301.2" cy="463.0" r="4.53"/><circle cx="301.2" cy="480.1" r="3.98"/><circle cx="301.2" cy="497.3" r="3.30"/><circle cx="301.2" cy="514.4" r="2.60"/><circle cx="301.2" cy="531.6" r="1.56"/><circle cx="301.2" cy="548.7" r="1.2" fill-opacity="0.18"/><circle cx="309.8" cy="214.5" r="1.2" fill-opacity="0.16"/><circle cx="309.8" cy="231.6" r="1.51"/><circle cx="309.8" cy="248.8" r="2.56"/><circle cx="309.8" cy="265.9" r="3.30"/><circle cx="309.8" cy="283.0" r="4.08"/><circle cx="309.8" cy="300.2" r="4.74"/><circle cx="309.8" cy="317.3" r="5.45"/><circle cx="309.8" cy="334.4" r="6.25"/><circle cx="309.8" cy="351.6" r="6.78"/><circle cx="309.8" cy="368.7" r="7.01"/><circle cx="309.8" cy="385.9" r="7.01"/><circle cx="309.8" cy="403.0" r="6.78"/><circle cx="309.8" cy="420.2" r="6.25"/><circle cx="309.8" cy="437.3" r="5.45"/><circle cx="309.8" cy="454.4" r="4.85"/><circle cx="309.8" cy="471.6" r="4.28"/><circle cx="309.8" cy="488.7" r="3.66"/><circle cx="309.8" cy="505.9" r="2.97"/><circle cx="309.8" cy="523.0" r="2.11"/><circle cx="309.8" cy="540.1" r="1.2" fill-opacity="0.71"/><circle cx="318.4" cy="223.0" r="1.2" fill-opacity="0.61"/><circle cx="318.4" cy="240.2" r="2.03"/><circle cx="318.4" cy="257.3" r="2.93"/><circle cx="318.4" cy="274.5" r="3.69"/><circle cx="318.4" cy="291.6" r="4.38"/><circle cx="318.4" cy="308.7" r="5.07"/><circle cx="318.4" cy="325.9" r="5.84"/><circle cx="318.4" cy="343.0" r="6.51"/><circle cx="318.4" cy="360.2" r="6.91"/><circle cx="318.4" cy="377.3" r="7.01"/><circle cx="318.4" cy="394.4" r="6.91"/><circle cx="318.4" cy="411.6" r="6.51"/><circle cx="318.4" cy="428.7" r="5.84"/><circle cx="318.4" cy="445.9" r="5.12"/><circle cx="318.4" cy="463.0" r="4.52"/><circle cx="318.4" cy="480.1" r="3.97"/><circle cx="318.4" cy="497.3" r="3.29"/><circle cx="318.4" cy="514.4" r="2.58"/><circle cx="318.4" cy="531.6" r="1.54"/><circle cx="318.4" cy="548.7" r="1.2" fill-opacity="0.17"/><circle cx="326.9" cy="214.5" r="1.2" fill-opacity="0.12"/><circle cx="326.9" cy="231.6" r="1.43"/><circle cx="326.9" cy="248.8" r="2.48"/><circle cx="326.9" cy="265.9" r="3.23"/><circle cx="326.9" cy="283.0" r="4.01"/><circle cx="326.9" cy="300.2" r="4.66"/><circle cx="326.9" cy="317.3" r="5.35"/><circle cx="326.9" cy="334.4" r="6.11"/><circle cx="326.9" cy="351.6" r="6.64"/><circle cx="326.9" cy="368.7" r="6.91"/><circle cx="326.9" cy="385.9" r="6.91"/><circle cx="326.9" cy="403.0" r="6.64"/><circle cx="326.9" cy="420.2" r="6.11"/><circle cx="326.9" cy="437.3" r="5.36"/><circle cx="326.9" cy="454.4" r="4.77"/><circle cx="326.9" cy="471.6" r="4.22"/><circle cx="326.9" cy="488.7" r="3.59"/><circle cx="326.9" cy="505.9" r="2.92"/><circle cx="326.9" cy="523.0" r="2.02"/><circle cx="326.9" cy="540.1" r="1.2" fill-opacity="0.61"/><circle cx="335.5" cy="223.0" r="1.2" fill-opacity="0.45"/><circle cx="335.5" cy="240.2" r="1.89"/><circle cx="335.5" cy="257.3" r="2.84"/><circle cx="335.5" cy="274.5" r="3.55"/><circle cx="335.5" cy="291.6" r="4.26"/><circle cx="335.5" cy="308.7" r="4.90"/><circle cx="335.5" cy="325.9" r="5.58"/><circle cx="335.5" cy="343.0" r="6.25"/><circle cx="335.5" cy="360.2" r="6.64"/><circle cx="335.5" cy="377.3" r="6.78"/><circle cx="335.5" cy="394.4" r="6.64"/><circle cx="335.5" cy="411.6" r="6.25"/><circle cx="335.5" cy="428.7" r="5.58"/><circle cx="335.5" cy="445.9" r="4.97"/><circle cx="335.5" cy="463.0" r="4.40"/><circle cx="335.5" cy="480.1" r="3.85"/><circle cx="335.5" cy="497.3" r="3.16"/><circle cx="335.5" cy="514.4" r="2.44"/><circle cx="335.5" cy="531.6" r="1.40"/><circle cx="335.5" cy="548.7" r="1.2" fill-opacity="0.11"/><circle cx="344.1" cy="214.5" r="1.2" fill-opacity="0.06"/><circle cx="344.1" cy="231.6" r="1.23"/><circle cx="344.1" cy="248.8" r="2.28"/><circle cx="344.1" cy="265.9" r="3.05"/><circle cx="344.1" cy="283.0" r="3.81"/><circle cx="344.1" cy="300.2" r="4.43"/><circle cx="344.1" cy="317.3" r="5.07"/><circle cx="344.1" cy="334.4" r="5.71"/><circle cx="344.1" cy="351.6" r="6.25"/><circle cx="344.1" cy="368.7" r="6.51"/><circle cx="344.1" cy="385.9" r="6.51"/><circle cx="344.1" cy="403.0" r="6.25"/><circle cx="344.1" cy="420.2" r="5.71"/><circle cx="344.1" cy="437.3" r="5.11"/><circle cx="344.1" cy="454.4" r="4.56"/><circle cx="344.1" cy="471.6" r="4.05"/><circle cx="344.1" cy="488.7" r="3.41"/><circle cx="344.1" cy="505.9" r="2.79"/><circle cx="344.1" cy="523.0" r="1.82"/><circle cx="344.1" cy="540.1" r="1.2" fill-opacity="0.39"/><circle cx="352.7" cy="223.0" r="1.2" fill-opacity="0.24"/><circle cx="352.7" cy="240.2" r="1.62"/><circle cx="352.7" cy="257.3" r="2.60"/><circle cx="352.7" cy="274.5" r="3.28"/><circle cx="352.7" cy="291.6" r="4.01"/><circle cx="352.7" cy="308.7" r="4.58"/><circle cx="352.7" cy="325.9" r="5.16"/><circle cx="352.7" cy="343.0" r="5.71"/><circle cx="352.7" cy="360.2" r="6.11"/><circle cx="352.7" cy="377.3" r="6.25"/><circle cx="352.7" cy="394.4" r="6.11"/><circle cx="352.7" cy="411.6" r="5.71"/><circle cx="352.7" cy="428.7" r="5.19"/><circle cx="352.7" cy="445.9" r="4.69"/><circle cx="352.7" cy="463.0" r="4.20"/><circle cx="352.7" cy="480.1" r="3.61"/><circle cx="352.7" cy="497.3" r="2.97"/><circle cx="352.7" cy="514.4" r="2.17"/><circle cx="352.7" cy="531.6" r="1.2" fill-opacity="0.90"/><circle cx="352.7" cy="548.7" r="1.2" fill-opacity="0.04"/><circle cx="361.2" cy="231.6" r="1.2" fill-opacity="0.58"/><circle cx="361.2" cy="248.8" r="1.94"/><circle cx="361.2" cy="265.9" r="2.84"/><circle cx="361.2" cy="283.0" r="3.48"/><circle cx="361.2" cy="300.2" r="4.14"/><circle cx="361.2" cy="317.3" r="4.66"/><circle cx="361.2" cy="334.4" r="5.16"/><circle cx="361.2" cy="351.6" r="5.58"/><circle cx="361.2" cy="368.7" r="5.84"/><circle cx="361.2" cy="385.9" r="5.84"/><circle cx="361.2" cy="403.0" r="5.58"/><circle cx="361.2" cy="420.2" r="5.19"/><circle cx="361.2" cy="437.3" r="4.75"/><circle cx="361.2" cy="454.4" r="4.28"/><circle cx="361.2" cy="471.6" r="3.76"/><circle cx="361.2" cy="488.7" r="3.12"/><circle cx="361.2" cy="505.9" r="2.46"/><circle cx="361.2" cy="523.0" r="1.48"/><circle cx="361.2" cy="540.1" r="1.2" fill-opacity="0.17"/><circle cx="369.8" cy="223.0" r="1.2" fill-opacity="0.07"/><circle cx="369.8" cy="240.2" r="1.22"/><circle cx="369.8" cy="257.3" r="2.20"/><circle cx="369.8" cy="274.5" r="2.96"/><circle cx="369.8" cy="291.6" r="3.61"/><circle cx="369.8" cy="308.7" r="4.21"/><circle cx="369.8" cy="325.9" r="4.66"/><circle cx="369.8" cy="343.0" r="5.07"/><circle cx="369.8" cy="360.2" r="5.35"/><circle cx="369.8" cy="377.3" r="5.45"/><circle cx="369.8" cy="394.4" r="5.36"/><circle cx="369.8" cy="411.6" r="5.10"/><circle cx="369.8" cy="428.7" r="4.74"/><circle cx="369.8" cy="445.9" r="4.32"/><circle cx="369.8" cy="463.0" r="3.86"/><circle cx="369.8" cy="480.1" r="3.27"/><circle cx="369.8" cy="497.3" r="2.69"/><circle cx="369.8" cy="514.4" r="1.78"/><circle cx="369.8" cy="531.6" r="1.2" fill-opacity="0.41"/><circle cx="378.4" cy="231.6" r="1.2" fill-opacity="0.20"/><circle cx="378.4" cy="248.8" r="1.48"/><circle cx="378.4" cy="265.9" r="2.40"/><circle cx="378.4" cy="283.0" r="3.05"/><circle cx="378.4" cy="300.2" r="3.68"/><circle cx="378.4" cy="317.3" r="4.21"/><circle cx="378.4" cy="334.4" r="4.59"/><circle cx="378.4" cy="351.6" r="4.91"/><circle cx="378.4" cy="368.7" r="5.08"/><circle cx="378.4" cy="385.9" r="5.09"/><circle cx="378.4" cy="403.0" r="4.94"/><circle cx="378.4" cy="420.2" r="4.66"/><circle cx="378.4" cy="437.3" r="4.31"/><circle cx="378.4" cy="454.4" r="3.90"/><circle cx="378.4" cy="471.6" r="3.35"/><circle cx="378.4" cy="488.7" r="2.83"/><circle cx="378.4" cy="505.9" r="2.00"/><circle cx="378.4" cy="523.0" r="1.2" fill-opacity="0.75"/><circle cx="378.4" cy="540.1" r="1.2" fill-opacity="0.03"/><circle cx="386.9" cy="240.2" r="1.2" fill-opacity="0.37"/><circle cx="386.9" cy="257.3" r="1.68"/><circle cx="386.9" cy="274.5" r="2.54"/><circle cx="386.9" cy="291.6" r="3.10"/><circle cx="386.9" cy="308.7" r="3.69"/><circle cx="386.9" cy="325.9" r="4.15"/><circle cx="386.9" cy="343.0" r="4.45"/><circle cx="386.9" cy="360.2" r="4.68"/><circle cx="386.9" cy="377.3" r="4.77"/><circle cx="386.9" cy="394.4" r="4.71"/><circle cx="386.9" cy="411.6" r="4.51"/><circle cx="386.9" cy="428.7" r="4.25"/><circle cx="386.9" cy="445.9" r="3.88"/><circle cx="386.9" cy="463.0" r="3.39"/><circle cx="386.9" cy="480.1" r="2.89"/><circle cx="386.9" cy="497.3" r="2.17"/><circle cx="386.9" cy="514.4" r="1.26"/><circle cx="386.9" cy="531.6" r="1.2" fill-opacity="0.10"/><circle cx="395.5" cy="231.6" r="1.2" fill-opacity="0.02"/><circle cx="395.5" cy="248.8" r="1.2" fill-opacity="0.58"/><circle cx="395.5" cy="265.9" r="1.82"/><circle cx="395.5" cy="283.0" r="2.61"/><circle cx="395.5" cy="300.2" r="3.11"/><circle cx="395.5" cy="317.3" r="3.63"/><circle cx="395.5" cy="334.4" r="4.03"/><circle cx="395.5" cy="351.6" r="4.29"/><circle cx="395.5" cy="368.7" r="4.41"/><circle cx="395.5" cy="385.9" r="4.42"/><circle cx="395.5" cy="403.0" r="4.33"/><circle cx="395.5" cy="420.2" r="4.13"/><circle cx="395.5" cy="437.3" r="3.80"/><circle cx="395.5" cy="454.4" r="3.36"/><circle cx="395.5" cy="471.6" r="2.91"/><circle cx="395.5" cy="488.7" r="2.27"/><circle cx="395.5" cy="505.9" r="1.42"/><circle cx="395.5" cy="523.0" r="1.2" fill-opacity="0.20"/><circle cx="404.1" cy="240.2" r="1.2" fill-opacity="0.06"/><circle cx="404.1" cy="257.3" r="1.2" fill-opacity="0.75"/><circle cx="404.1" cy="274.5" r="1.89"/><circle cx="404.1" cy="291.6" r="2.62"/><circle cx="404.1" cy="308.7" r="3.07"/><circle cx="404.1" cy="325.9" r="3.51"/><circle cx="404.1" cy="343.0" r="3.86"/><circle cx="404.1" cy="360.2" r="4.06"/><circle cx="404.1" cy="377.3" r="4.14"/><circle cx="404.1" cy="394.4" r="4.09"/><circle cx="404.1" cy="411.6" r="3.94"/><circle cx="404.1" cy="428.7" r="3.66"/><circle cx="404.1" cy="445.9" r="3.29"/><circle cx="404.1" cy="463.0" r="2.90"/><circle cx="404.1" cy="480.1" r="2.31"/><circle cx="404.1" cy="497.3" r="1.52"/><circle cx="404.1" cy="514.4" r="1.2" fill-opacity="0.30"/><circle cx="412.6" cy="248.8" r="1.2" fill-opacity="0.09"/><circle cx="412.6" cy="265.9" r="1.2" fill-opacity="0.86"/><circle cx="412.6" cy="283.0" r="1.90"/><circle cx="412.6" cy="300.2" r="2.56"/><circle cx="412.6" cy="317.3" r="2.99"/><circle cx="412.6" cy="334.4" r="3.33"/><circle cx="412.6" cy="351.6" r="3.60"/><circle cx="412.6" cy="368.7" r="3.75"/><circle cx="412.6" cy="385.9" r="3.78"/><circle cx="412.6" cy="403.0" r="3.68"/><circle cx="412.6" cy="420.2" r="3.47"/><circle cx="412.6" cy="437.3" r="3.15"/><circle cx="412.6" cy="454.4" r="2.84"/><circle cx="412.6" cy="471.6" r="2.28"/><circle cx="412.6" cy="488.7" r="1.55"/><circle cx="412.6" cy="505.9" r="1.2" fill-opacity="0.38"/><circle cx="421.2" cy="257.3" r="1.2" fill-opacity="0.12"/><circle cx="421.2" cy="274.5" r="1.2" fill-opacity="0.87"/><circle cx="421.2" cy="291.6" r="1.84"/><circle cx="421.2" cy="308.7" r="2.45"/><circle cx="421.2" cy="325.9" r="2.87"/><circle cx="421.2" cy="343.0" r="3.10"/><circle cx="421.2" cy="360.2" r="3.30"/><circle cx="421.2" cy="377.3" r="3.39"/><circle cx="421.2" cy="394.4" r="3.36"/><circle cx="421.2" cy="411.6" r="3.21"/><circle cx="421.2" cy="428.7" r="3.00"/><circle cx="421.2" cy="445.9" r="2.72"/><circle cx="421.2" cy="463.0" r="2.19"/><circle cx="421.2" cy="480.1" r="1.53"/><circle cx="421.2" cy="497.3" r="1.2" fill-opacity="0.41"/><circle cx="421.2" cy="514.4" r="1.2" fill-opacity="0.02"/><circle cx="429.8" cy="265.9" r="1.2" fill-opacity="0.12"/><circle cx="429.8" cy="283.0" r="1.2" fill-opacity="0.79"/><circle cx="429.8" cy="300.2" r="1.73"/><circle cx="429.8" cy="317.3" r="2.27"/><circle cx="429.8" cy="334.4" r="2.68"/><circle cx="429.8" cy="351.6" r="2.90"/><circle cx="429.8" cy="368.7" r="3.00"/><circle cx="429.8" cy="385.9" r="3.02"/><circle cx="429.8" cy="403.0" r="2.96"/><circle cx="429.8" cy="420.2" r="2.83"/><circle cx="429.8" cy="437.3" r="2.51"/><circle cx="429.8" cy="454.4" r="2.04"/><circle cx="429.8" cy="471.6" r="1.44"/><circle cx="429.8" cy="488.7" r="1.2" fill-opacity="0.39"/><circle cx="429.8" cy="505.9" r="1.2" fill-opacity="0.02"/><circle cx="438.4" cy="274.5" r="1.2" fill-opacity="0.10"/><circle cx="438.4" cy="291.6" r="1.2" fill-opacity="0.63"/><circle cx="438.4" cy="308.7" r="1.54"/><circle cx="438.4" cy="325.9" r="2.02"/><circle cx="438.4" cy="343.0" r="2.38"/><circle cx="438.4" cy="360.2" r="2.59"/><circle cx="438.4" cy="377.3" r="2.69"/><circle cx="438.4" cy="394.4" r="2.66"/><circle cx="438.4" cy="411.6" r="2.51"/><circle cx="438.4" cy="428.7" r="2.23"/><circle cx="438.4" cy="445.9" r="1.82"/><circle cx="438.4" cy="463.0" r="1.29"/><circle cx="438.4" cy="480.1" r="1.2" fill-opacity="0.31"/><circle cx="438.4" cy="497.3" r="1.2" fill-opacity="0.02"/><circle cx="446.9" cy="283.0" r="1.2" fill-opacity="0.07"/><circle cx="446.9" cy="300.2" r="1.2" fill-opacity="0.43"/><circle cx="446.9" cy="317.3" r="1.30"/><circle cx="446.9" cy="334.4" r="1.72"/><circle cx="446.9" cy="351.6" r="2.00"/><circle cx="446.9" cy="368.7" r="2.16"/><circle cx="446.9" cy="385.9" r="2.20"/><circle cx="446.9" cy="403.0" r="2.11"/><circle cx="446.9" cy="420.2" r="1.89"/><circle cx="446.9" cy="437.3" r="1.54"/><circle cx="446.9" cy="454.4" r="1.2" fill-opacity="0.81"/><circle cx="446.9" cy="471.6" r="1.2" fill-opacity="0.22"/><circle cx="455.5" cy="291.6" r="1.2" fill-opacity="0.03"/><circle cx="455.5" cy="308.7" r="1.2" fill-opacity="0.24"/><circle cx="455.5" cy="325.9" r="1.2" fill-opacity="0.70"/><circle cx="455.5" cy="343.0" r="1.34"/><circle cx="455.5" cy="360.2" r="1.57"/><circle cx="455.5" cy="377.3" r="1.67"/><circle cx="455.5" cy="394.4" r="1.64"/><circle cx="455.5" cy="411.6" r="1.48"/><circle cx="455.5" cy="428.7" r="1.21"/><circle cx="455.5" cy="445.9" r="1.2" fill-opacity="0.46"/><circle cx="455.5" cy="463.0" r="1.2" fill-opacity="0.12"/><circle cx="464.1" cy="317.3" r="1.2" fill-opacity="0.10"/><circle cx="464.1" cy="334.4" r="1.2" fill-opacity="0.31"/><circle cx="464.1" cy="351.6" r="1.2" fill-opacity="0.60"/><circle cx="464.1" cy="368.7" r="1.2" fill-opacity="0.81"/><circle cx="464.1" cy="385.9" r="1.2" fill-opacity="0.86"/><circle cx="464.1" cy="403.0" r="1.2" fill-opacity="0.73"/><circle cx="464.1" cy="420.2" r="1.2" fill-opacity="0.47"/><circle cx="464.1" cy="437.3" r="1.2" fill-opacity="0.21"/><circle cx="464.1" cy="454.4" r="1.2" fill-opacity="0.04"/><circle cx="472.6" cy="325.9" r="1.2" fill-opacity="0.02"/><circle cx="472.6" cy="343.0" r="1.2" fill-opacity="0.09"/><circle cx="472.6" cy="360.2" r="1.2" fill-opacity="0.19"/><circle cx="472.6" cy="377.3" r="1.2" fill-opacity="0.24"/><circle cx="472.6" cy="394.4" r="1.2" fill-opacity="0.23"/><circle cx="472.6" cy="411.6" r="1.2" fill-opacity="0.15"/><circle cx="472.6" cy="428.7" r="1.2" fill-opacity="0.06"/><circle cx="481.2" cy="368.7" r="1.2" fill-opacity="0.02"/><circle cx="481.2" cy="385.9" r="1.2" fill-opacity="0.03"/></g>
<g stroke="#000" stroke-dasharray="4 4" stroke-dashoffset="-3" shape-rendering="crispEdges"><path d="M53 112.5H601M53.5 112V660"/></g><g stroke="#000" stroke-dasharray="4 4" shape-rendering="crispEdges"><path d="M53 659.5H601M600.5 112V660"/></g><g stroke="#151515" stroke-dasharray="4 4" stroke-dashoffset="-7" shape-rendering="crispEdges"><path d="M53 111.5H601M52.5 112V660"/></g><g stroke="#151515" stroke-dasharray="4 4" stroke-dashoffset="-4" shape-rendering="crispEdges"><path d="M53 660.5H601M601.5 112V660"/></g>
</svg>

<!-- middle column -->
<div class="a" style="left:625px;top:66px;width:340px;height:636px;background:#2d2d2d"></div>
<div class="a" style="left:628px;top:67px;width:336px;height:11px;background:#353535;border-top:1px solid #454545"></div>
<svg class="a" style="left:653px;top:69px" width="9" height="6"><path d="M4.2 0L0.4 3L4.2 6ZM8.2 0L4.4 3L8.2 6Z" fill="#c4c4c4"/></svg>
<div class="a" style="left:628px;top:79px;width:37px;height:40px;background:#535353;border-top:1px solid #5e5e5e"></div>
<div class="a" style="left:628px;top:120px;width:37px;height:40px;background:#535353;border-top:1px solid #5e5e5e"></div>
<div class="a" style="left:628px;top:161px;width:37px;height:68px;background:#535353;border-top:1px solid #5e5e5e"></div>
<div class="a" style="left:628px;top:230px;width:37px;height:471px;background:#535353;border-top:1px solid #5e5e5e"></div>
<svg class="a" style="left:628px;top:0" width="37" height="240">
<g fill="#2c2c2c">
<path d="M9 82h1v5h-1zM11 82h1v5h-1zM13 82h1v5h-1zM15 82h1v5h-1zM17 82h1v5h-1zM19 82h1v5h-1zM21 82h1v5h-1zM23 82h1v5h-1zM25 82h1v5h-1zM27 82h1v5h-1z"/>
<path d="M9 123h1v5h-1zM11 123h1v5h-1zM13 123h1v5h-1zM15 123h1v5h-1zM17 123h1v5h-1zM19 123h1v5h-1zM21 123h1v5h-1zM23 123h1v5h-1zM25 123h1v5h-1zM27 123h1v5h-1z"/>
<path d="M9 164h1v5h-1zM11 164h1v5h-1zM13 164h1v5h-1zM15 164h1v5h-1zM17 164h1v5h-1zM19 164h1v5h-1zM21 164h1v5h-1zM23 164h1v5h-1zM25 164h1v5h-1zM27 164h1v5h-1z"/>
</g>
<!-- history icon -->
<rect x="13.5" y="94.5" width="4" height="4" fill="#3a3a3a" stroke="#dcdcdc"/>
<rect x="13.5" y="100.5" width="4" height="4" fill="#3a3a3a" stroke="#dcdcdc"/>
<rect x="13" y="106" width="5" height="5" fill="#cfcfcf"/>
<path d="M21 94.5H27L21 100.5Z" fill="#d8d8d8"/>
<path d="M23.5 97 C28.5 98.5 29 105 22 109.5 C25.5 105.5 25.5 100.5 22 99Z" fill="#d8d8d8"/>
<!-- 3d icon -->
<path d="M16.5 134.5 L21.5 137 L21.5 143.5 L16.5 146 L11.5 143.5 L11.5 137Z" fill="#d4d4d4"/>
<path d="M11.5 137L16.5 139.5L21.5 137M16.5 139.5V146" fill="none" stroke="#707070" stroke-width=".9"/>
<rect x="23" y="135" width="5" height="4" fill="#d8d8d8"/><rect x="23" y="140.5" width="5" height="4" fill="#d8d8d8"/>
<rect x="11" y="147" width="17" height="4" fill="#d0d0d0"/><path d="M23.5 148l1.7 2 1.7-2z" fill="#333"/>
<!-- A| icon -->
<path d="M12 192 L16.6 176 L19 176 L23.6 192 L21 192 L19.9 188.2 L15.7 188.2 L14.6 192Z M16.3 185.8 L19.3 185.8 L17.8 180.3Z" fill="#d8d8d8"/>
<rect x="25" y="175.5" width="1" height="17" fill="#d8d8d8"/>
<!-- pilcrow -->
<path d="M19 205.5 H25 V219.5 H23.5 V207 H22 V219.5 H20.5 V212.5 C16 212.5 13.5 211 13.5 209 C13.5 206.5 16 205.5 19 205.5Z" fill="#d8d8d8"/>
</svg>

<!-- right column -->
<svg class="a" style="left:952px;top:69px" width="9" height="6"><path d="M0.4 0L4.2 3L0.4 6ZM4.4 0L8.2 3L4.4 6Z" fill="#c4c4c4"/></svg>
<!-- color panel -->
<div class="a" style="left:668px;top:79px;width:296px;height:243px;background:#535353"></div>
<div class="a" style="left:668px;top:79px;width:296px;height:17px;background:#393939;border-top:1px solid #474747"></div>
<div class="a" style="left:668px;top:95px;width:296px;height:1px;background:#252525"></div>
<div class="a" style="left:668px;top:96px;width:296px;height:1px;background:#6a6a6a"></div>
<div class="a" style="left:708px;top:79px;width:58px;height:16px;border-left:1px solid #2e2e2e;border-right:1px solid #2e2e2e;background:#3b3b3b"></div>
<div class="a" style="left:668px;top:79px;width:40px;height:18px;background:#535353;border-top:1px solid #656565"></div>
<div class="t" style="left:675px;top:81px;color:#e8e8e8;font-size:13px;margin-top:-1px;transform:scaleX(0.6795);transform-origin:0 0">カラー</div>
<div class="t" style="left:715px;top:81px;color:#a8a8a8;font-size:13px;margin-top:-1px;transform:scaleX(0.6615);transform-origin:0 0">スウォッチ</div>
<svg class="a" style="left:946px;top:83px" width="15" height="9"><path d="M0 3.5H5L2.5 6.5Z" fill="#d0d0d0"/><path d="M6 0.5h8M6 2.5h8M6 4.5h8M6 6.5h8M6 8.5h8" stroke="#d0d0d0" stroke-width="1"/></svg>
<div class="a" style="left:687px;top:116px;width:20px;height:20px;background:#000;border:1px solid #2a2a2a;box-shadow:inset 0 0 0 1.6px #fff"></div>
<div class="a" style="left:676px;top:105px;width:22px;height:22px;background:#fff;border:1px solid #7c7c7c;box-shadow:inset 0 0 0 1px #262626"></div>
<div class="a" style="left:712px;top:102px;width:201px;height:215px;border:1px solid #2e3535;border-bottom:1px solid #6a6a6a;background:linear-gradient(rgba(12,6,4,0),rgba(12,6,4,.5) 50%,#0a0505),linear-gradient(90deg,#fdf9ef 0%,#f3c6b3 20%,#ee9080 45%,#e84a4e 72%,#e8061e 90%,#e8001c 100%)"></div>
<svg class="a" style="left:708px;top:98px" width="14" height="14"><path d="M5 5 m5.5 0 a5.5 5.5 0 0 1 -5.5 5.5" fill="none" stroke="#222" stroke-width="1.4"/></svg>
<div class="a" style="left:928px;top:102px;width:21px;height:215px;border:1px solid #2e3535;border-bottom:1px solid #6a6a6a;background:linear-gradient(#f0001c 0%,#e800a0 9%,#e000ff 17%,#3000ff 32%,#5aa8ff 42%,#60f0e0 50%,#40f040 60%,#50ff00 66%,#d0ff00 78%,#ffee00 83%,#ff8000 91%,#f0001c 100%)"></div>
<svg class="a" style="left:919px;top:312px" width="8" height="9"><path d="M1.5 0.5 C0.5 0.5 0.5 1.5 0.5 2.5 V6.5 C0.5 7.5 0.5 8.5 1.5 8.5 L3.5 8.5 L7.5 4.5 L3.5 0.5Z" fill="#e0e0e0"/></svg>
<svg class="a" style="left:953px;top:311px" width="10" height="10"><g fill="#2a2a2a"><rect x="8" y="0" width="1" height="1"/><rect x="6" y="2" width="1" height="1"/><rect x="8" y="2" width="1" height="1"/><rect x="4" y="4" width="1" height="1"/><rect x="6" y="4" width="1" height="1"/><rect x="8" y="4" width="1" height="1"/><rect x="2" y="6" width="1" height="1"/><rect x="4" y="6" width="1" height="1"/><rect x="6" y="6" width="1" height="1"/><rect x="8" y="6" width="1" height="1"/><rect x="0" y="8" width="1" height="1"/><rect x="2" y="8" width="1" height="1"/><rect x="4" y="8" width="1" height="1"/><rect x="6" y="8" width="1" height="1"/><rect x="8" y="8" width="1" height="1"/></g></svg>

<!-- adjustments panel -->
<div class="a" style="left:668px;top:325px;width:296px;height:129px;background:#535353"></div>
<div class="a" style="left:668px;top:325px;width:296px;height:17px;background:#393939;border-top:1px solid #474747"></div>
<div class="a" style="left:668px;top:341px;width:296px;height:1px;background:#252525"></div>
<div class="a" style="left:668px;top:342px;width:296px;height:1px;background:#6a6a6a"></div>
<div class="a" style="left:729px;top:325px;width:51px;height:16px;border-left:1px solid #2e2e2e;border-right:1px solid #2e2e2e;background:#3b3b3b"></div>
<div class="a" style="left:668px;top:325px;width:61px;height:18px;background:#535353;border-top:1px solid #656565"></div>
<div class="t" style="left:676px;top:327px;color:#e8e8e8;font-size:13px;margin-top:-1px;transform:scaleX(0.9038);transform-origin:0 0">色調補正</div>
<div class="t" style="left:736px;top:327px;color:#a8a8a8;font-size:13px;margin-top:-1px;transform:scaleX(0.7115);transform-origin:0 0">スタイル</div>
<svg class="a" style="left:946px;top:329px" width="15" height="9"><path d="M0 3.5H5L2.5 6.5Z" fill="#d0d0d0"/><path d="M6 0.5h8M6 2.5h8M6 4.5h8M6 6.5h8M6 8.5h8" stroke="#d0d0d0" stroke-width="1"/></svg>
<div class="t" style="left:678px;top:349px;color:#f0f0f0;transform:scaleX(0.9331);transform-origin:0 0">色調補正 を追加</div>
<svg class="a" style="left:715px;top:365px" width="145" height="80">
<defs>
<linearGradient id="ag1" x1="0" y1="0" x2="1" y2="1"><stop offset="0" stop-color="#e8e8e8"/><stop offset="1" stop-color="#9a9a9a"/></linearGradient>
<linearGradient id="ag2" x1="0" x2="1"><stop offset="0" stop-color="#2a2a2a"/><stop offset="1" stop-color="#e0e0e0"/></linearGradient>
<radialGradient id="ag3"><stop offset="0" stop-color="#444"/><stop offset="1" stop-color="#d8d8d8"/></radialGradient>
</defs>
<g fill="#d8d8d8" stroke="none">
<!-- sun -->
<circle cx="24.5" cy="15" r="4.2" fill="none" stroke="#e0e0e0" stroke-width="1.5"/>
<path d="M24.5 11.5 A3.5 3.5 0 0 1 24.5 18.5Z" fill="#e0e0e0"/>
<path d="M24 7h1.2v2.2H24zM24 20.8h1.2V23H24zM16 14.4h2.2v1.2H16zM30.8 14.4H33v1.2h-2.2z"/>
<path d="M18.5 9l1.6 1.6M29 19.4l1.6 1.6M30.6 9L29 10.6M20.1 19.4L18.5 21" stroke="#e0e0e0" stroke-width="1.3"/>
<!-- levels -->
<g fill="#d4d4d4"><rect x="40.0" y="16.0" width="1" height="3.0"/><rect x="41.0" y="13.0" width="1" height="6.0"/><rect x="42.0" y="17.0" width="1" height="2.0"/><rect x="43.0" y="12.0" width="1" height="7.0"/><rect x="44.0" y="15.0" width="1" height="4.0"/><rect x="45.0" y="10.0" width="1" height="9.0"/><rect x="46.0" y="16.0" width="1" height="3.0"/><rect x="47.0" y="9.0" width="1" height="10.0"/><rect x="48.0" y="14.0" width="1" height="5.0"/><rect x="49.0" y="11.0" width="1" height="8.0"/><rect x="50.0" y="16.0" width="1" height="3.0"/><rect x="51.0" y="10.0" width="1" height="9.0"/><rect x="52.0" y="15.0" width="1" height="4.0"/><rect x="53.0" y="12.0" width="1" height="7.0"/><rect x="54.0" y="16.0" width="1" height="3.0"/><rect x="55.0" y="13.0" width="1" height="6.0"/><rect x="56.0" y="17.0" width="1" height="2.0"/><rect x="57.0" y="15.0" width="1" height="4.0"/></g><rect x="40" y="18" width="18" height="2.5" fill="#e8e8e8"/>
<!-- curves -->
<rect x="65.5" y="8.5" width="16" height="13" fill="#9a9a9a" stroke="#e0e0e0"/>
<path d="M66 12.5h15M66 17h15M70 9v12M75 9v12" stroke="#6a6a6a" stroke-width="1"/>
<path d="M66 21 C72 21 72 9 81 9" fill="none" stroke="#f0f0f0" stroke-width="1.3"/>
<!-- exposure -->
<rect x="89.5" y="8.5" width="16" height="13" fill="#d8d8d8" stroke="#e8e8e8"/>
<path d="M90 21 L105 9 V21Z" fill="#8e8e8e"/>
<path d="M91 12.5h5M93.5 10v5M99 18h5" stroke="#2a2a2a" stroke-width="1.1"/>
<!-- vibrance -->
<path d="M114 10.5 H129.5 L121.75 23Z" fill="url(#ag3)"/>
<!-- hue/sat -->
<rect x="5.5" y="36.5" width="16" height="13" fill="url(#ag2)" stroke="#e0e0e0"/>
<rect x="6" y="37" width="15" height="5.5" fill="#bdbdbd"/>
<path d="M9 37v5M12 37v5M15 37v5M18 37v5" stroke="#8a8a8a" stroke-width="1.5"/>
<!-- balance -->
<path d="M36.5 34 V47M30 38.5h13M32 47.5h9" stroke="#d8d8d8" stroke-width="1.3"/>
<path d="M34 36.5 L36.5 34 L39 36.5Z"/>
<path d="M28.5 45 L31.5 39 L34.5 45 A3 2.5 0 0 1 28.5 45Z M39 45 L42 39 L45 45 A3 2.5 0 0 1 39 45Z" fill="#d0d0d0"/>
<!-- b&w -->
<rect x="53.5" y="36.5" width="16" height="13" fill="#d8d8d8" stroke="#e0e0e0"/>
<rect x="54" y="37" width="6" height="12" fill="#3a3a3a"/>
<!-- photo filter -->
<rect x="76" y="37" width="14" height="10" fill="#d0d0d0"/>
<path d="M79 37v-1.5h3V37z"/>
<circle cx="82" cy="42" r="3" fill="#555" stroke="#d8d8d8"/>
<circle cx="86.5" cy="45" r="5" fill="#9a9a9a" stroke="#d8d8d8" stroke-width="1.2"/>
<!-- mixer -->
<circle cx="108.5" cy="39.5" r="4" fill="#d0d0d0"/><circle cx="105" cy="45.5" r="4" fill="#c0c0c0"/><circle cx="112" cy="45.5" r="4" fill="#c0c0c0"/>
<path d="M108.5 42.5l-1.5 2h3z" fill="#555"/>
<!-- lookup -->
<rect x="125.5" y="36.5" width="16" height="13" fill="url(#ag1)" stroke="#e0e0e0"/>
<path d="M126 40.8h15M126 45.2h15M129.8 37v12M133.8 37v12M137.8 37v12" stroke="#3a3a3a" stroke-width="1"/>
<!-- invert -->
<rect x="17.5" y="62.5" width="16" height="13" fill="url(#ag1)" stroke="#e0e0e0"/>
<path d="M18 75 L33 63" stroke="#2a2a2a" stroke-width="1.2"/>
<ellipse cx="25.5" cy="69" rx="4" ry="3" fill="#6a6a6a" transform="rotate(-35 25.5 69)"/>
<!-- posterize -->
<rect x="41.5" y="62.5" width="16" height="13" fill="url(#ag1)" stroke="#e0e0e0"/>
<path d="M42 72 L52 63M44 75 L57 64M48 75 L57 68" stroke="#7a7a7a" stroke-width="1.5"/>
<!-- threshold -->
<rect x="65.5" y="62.5" width="16" height="13" fill="#d8d8d8" stroke="#e0e0e0"/>
<path d="M66 70 L70 70 L72 67 L76 67 L78 64 L81 64 V67 L78 67 L76 70 L72 70 L70 73 L66 73Z M74 75 L77 72 L81 72 V75Z" fill="#333"/>
<!-- selective -->
<rect x="89.5" y="62.5" width="16" height="13" fill="#9a9a9a" stroke="#e0e0e0"/>
<path d="M90 63 L97.5 69 L90 75Z M105 63 L97.5 69 L105 75Z" fill="#d4d4d4"/>
<!-- gradient map -->
<rect x="113.5" y="62.5" width="16" height="13" fill="url(#ag2)" stroke="#e0e0e0"/>
</g>
</svg>


<!-- layers panel -->
<div class="a" style="left:668px;top:457px;width:296px;height:244px;background:#535353"></div>
<div class="a" style="left:668px;top:457px;width:296px;height:17px;background:#393939;border-top:1px solid #474747"></div>
<div class="a" style="left:668px;top:473px;width:296px;height:1px;background:#252525"></div>
<div class="a" style="left:668px;top:474px;width:296px;height:1px;background:#6a6a6a"></div>
<div class="a" style="left:719px;top:457px;width:60px;height:16px;border-left:1px solid #2e2e2e;border-right:1px solid #2e2e2e;background:#3b3b3b"></div>
<div class="a" style="left:778px;top:457px;width:35px;height:16px;border-left:1px solid #2e2e2e;border-right:1px solid #2e2e2e;background:#3b3b3b"></div>
<div class="a" style="left:668px;top:457px;width:51px;height:18px;background:#535353;border-top:1px solid #656565"></div>
<div class="t" style="left:675px;top:459px;color:#e8e8e8;font-size:13px;margin-top:-1px;transform:scaleX(0.7404);transform-origin:0 0">レイヤー</div>
<div class="t" style="left:726px;top:459px;color:#a8a8a8;font-size:13px;margin-top:-1px;transform:scaleX(0.7000);transform-origin:0 0">チャンネル</div>
<div class="t" style="left:786px;top:459px;color:#a8a8a8;font-size:13px;margin-top:-1px;transform:scaleX(0.7692);transform-origin:0 0">パス</div>
<svg class="a" style="left:946px;top:461px" width="15" height="9"><path d="M0 3.5H5L2.5 6.5Z" fill="#d0d0d0"/><path d="M6 0.5h8M6 2.5h8M6 4.5h8M6 6.5h8M6 8.5h8" stroke="#d0d0d0" stroke-width="1"/></svg>
<!-- filter row -->
<div class="a" style="left:672px;top:479px;width:123px;height:18px;border:1px solid #333;border-radius:3px;background:linear-gradient(#6b6b6b,#575757)"></div>
<svg class="a" style="left:679px;top:481px" width="12" height="13"><circle cx="7" cy="5" r="3.6" fill="none" stroke="#e0e0e0" stroke-width="1.5"/><path d="M4.5 7.5L1.5 10.5" stroke="#e0e0e0" stroke-width="2.2" stroke-linecap="round"/></svg>
<div class="t" style="left:695px;top:481px;color:#f4f4f4;font-size:13px;transform:scaleX(0.8846);transform-origin:0 0">種類</div>
<svg class="a" style="left:784px;top:482px" width="6" height="11"><path d="M0 4.5L3 1L6 4.5ZM0 6.5L3 10L6 6.5Z" fill="#e0e0e0"/></svg>
<svg class="a" style="left:815px;top:478px" width="150" height="20">
<rect x="3.5" y="4.5" width="13" height="10" fill="none" stroke="#d8d8d8" stroke-width="1.2"/>
<path d="M5 13 L8 9.5 L10 11.5 L12 10 L15 13Z" fill="#d8d8d8"/><circle cx="13" cy="7" r="1.2" fill="#d8d8d8"/>
<circle cx="33" cy="9.5" r="5.5" fill="#9a9a9a" stroke="#e0e0e0" stroke-width="1.2"/><path d="M29.5 13 L37 5.5 A5.5 5.5 0 0 1 29.5 13Z" fill="#e0e0e0"/>
<path d="M51.5 4h11v3h-1l-.5-1.2h-3.2v8.4h1.5v1h-4.6v-1h1.5V5.8h-3.2L52.5 7h-1z" fill="#d8d8d8"/>
<rect x="77" y="5" width="9" height="9" fill="none" stroke="#d8d8d8" stroke-width="1.3"/>
<g fill="#535353" stroke="#e0e0e0" stroke-width="1"><rect x="75.5" y="3.5" width="3" height="3"/><rect x="84.5" y="3.5" width="3" height="3"/><rect x="75.5" y="12.5" width="3" height="3"/><rect x="84.5" y="12.5" width="3" height="3"/></g>
<path d="M103.5 3.5 H109 L111.5 6 V13.5 H103.5Z" fill="none" stroke="#d8d8d8" stroke-width="1.1"/>
<rect x="100" y="8.5" width="6.5" height="6.5" fill="#c8c8c8"/>
<rect x="136" y="2" width="9" height="16" fill="#2e2e2e" stroke="#3a3a3a"/>
<rect x="137" y="3" width="7" height="7" fill="url(#tog)"/>
<defs><linearGradient id="tog"><stop offset="0" stop-color="#aaa"/><stop offset="1" stop-color="#888"/></linearGradient></defs>
</svg>
<div class="a" style="left:668px;top:501px;width:296px;height:1px;background:#3a3a3a"></div>
<div class="a" style="left:668px;top:502px;width:296px;height:1px;background:#5f5f5f"></div>
<!-- blend / opacity -->
<div class="a" style="left:672px;top:507px;width:163px;height:18px;border:1px solid #404040;border-radius:3px;background:linear-gradient(#5c5c5c,#525252)"></div>
<div class="t" style="left:681px;top:509px;color:#b4b4b4;transform:scaleX(0.9375);transform-origin:0 0">通常</div>
<svg class="a" style="left:823px;top:510px" width="6" height="11"><path d="M0 4.5L3 1L6 4.5ZM0 6.5L3 10L6 6.5Z" fill="#a0a0a0"/></svg>
<div class="t" style="left:845px;top:509px;color:#c4c4c4;transform:scaleX(1.0243);transform-origin:0 0">不透明度 :</div>
<div class="a" style="left:904px;top:507px;width:56px;height:19px;border:1px solid #404040;border-radius:3px;background:linear-gradient(#5e5e5e,#555)"></div>
<div class="a" style="left:905px;top:508px;width:35px;height:17px;background:#4b4b4b"></div>
<div class="t" style="left:908px;top:510px;color:#7e7e7e;transform:scaleX(0.9282);transform-origin:0 0">100%</div>
<svg class="a" style="left:946px;top:515px" width="6" height="3"><path d="M0 0H6L3 3Z" fill="#b0b0b0"/></svg>
<div class="a" style="left:668px;top:529px;width:296px;height:1px;background:#3a3a3a"></div>
<div class="a" style="left:668px;top:530px;width:296px;height:1px;background:#5f5f5f"></div>
<!-- lock -->
<div class="t" style="left:676px;top:537px;color:#c0c0c0;transform:scaleX(0.7382);transform-origin:0 0">ロック :</div>
<svg class="a" style="left:714px;top:535px" width="82" height="17">
<rect x="2" y="4" width="11" height="11" fill="#9c9c9c"/><g fill="#666"><rect x="5.67" y="4" width="3.67" height="3.67"/><rect x="2" y="7.67" width="3.67" height="3.67"/><rect x="9.33" y="7.67" width="3.67" height="3.67"/><rect x="5.67" y="11.33" width="3.67" height="3.67"/></g>
<path d="M29 11.5 L37.5 3" stroke="#9e9e9e" stroke-width="2.4" stroke-linecap="round"/>
<path d="M21.5 14.5 C24 14 25.5 11 28 10.5 C30 10.5 30 13 28.5 14 C26.5 15 24 15 21.5 14.5Z" fill="#9e9e9e"/>
<path d="M51.5 3v12M45 9h13" stroke="#9e9e9e" stroke-width="1.3"/>
<path d="M51.5 1.5l-2.5 2.8h5zM51.5 16.5l-2.5-2.8h5zM44 9l2.8-2.5v5zM59 9l-2.8-2.5v5z" fill="#9e9e9e"/>
<path d="M70.5 8.5 V6.5 A3.5 3.5 0 0 1 77.5 6.5 V8.5" fill="none" stroke="#9e9e9e" stroke-width="1.6"/>
<rect x="69" y="8.5" width="10" height="7" fill="#9e9e9e"/><rect x="73.5" y="10.5" width="1" height="2.5" fill="#535353"/>
</svg>
<div class="t" style="left:872px;top:537px;color:#c4c4c4;transform:scaleX(0.9292);transform-origin:0 0">塗り :</div>
<div class="a" style="left:904px;top:535px;width:56px;height:19px;border:1px solid #404040;border-radius:3px;background:linear-gradient(#5e5e5e,#555)"></div>
<div class="a" style="left:905px;top:536px;width:35px;height:17px;background:#4b4b4b"></div>
<div class="t" style="left:908px;top:538px;color:#7e7e7e;transform:scaleX(0.9282);transform-origin:0 0">100%</div>
<svg class="a" style="left:946px;top:543px" width="6" height="3"><path d="M0 0H6L3 3Z" fill="#b0b0b0"/></svg>
<!-- list -->
<div class="a" style="left:668px;top:559px;width:296px;height:123px;background:#474747"></div>
<div class="a" style="left:949px;top:559px;width:15px;height:123px;background:linear-gradient(90deg,#3f3f3f,#454545)"></div>
<div class="a" style="left:668px;top:559px;width:281px;height:1px;background:#3a3a3a"></div>
<div class="a" style="left:668px;top:560px;width:31px;height:39px;background:#535353"></div>
<div class="a" style="left:699px;top:560px;width:250px;height:39px;background:#6b7c95"></div>
<div class="a" style="left:668px;top:599px;width:281px;height:1px;background:#3a3a3a"></div>
<svg class="a" style="left:675px;top:573px" width="16" height="11"><path d="M1 5.5 C4 1 12 1 15 5.5 C12 10 4 10 1 5.5Z" fill="#888"/><circle cx="8" cy="5.5" r="2.6" fill="#535353"/><circle cx="8" cy="5.5" r="1.4" fill="#888"/></svg>
<!-- thumbnails -->
<svg class="a" style="left:700px;top:561px" width="86" height="37">
<defs><radialGradient id="th"><stop offset="0" stop-color="#201810" stop-opacity="1"/><stop offset=".5" stop-color="#806850" stop-opacity=".6"/><stop offset="1" stop-color="#fff" stop-opacity="0"/></radialGradient></defs>
<rect x="2.5" y="2.5" width="31" height="31" fill="#fff" stroke="#000"/>
<g fill="url(#th)"><path d="M14 13.7 L9.5 9.2 L15.5 11.2Z M22 13.7 L26.5 9.2 L20.5 11.2Z M14 21.7 L9.5 26.2 L15.5 24.2Z M22 21.7 L26.5 26.2 L20.5 24.2Z"/></g>
<path d="M12 12 L14 14 M24 12 L22 14 M12 24 L14 22 M24 24 L22 22" stroke="#6a5a40" stroke-width="1.6" stroke-opacity=".45"/>
<rect x="14" y="13.7" width="8" height="8" fill="#000"/>
<path d="M38.5 16 V13.5 A3 3 0 0 1 44.5 13.5 V16 M38.5 19 V21.5 A3 3 0 0 0 44.5 21.5 V19 M41.5 14.5 V20.5" fill="none" stroke="#d4dae2" stroke-width="1.8"/>
<rect x="49.5" y="2.5" width="32" height="31" fill="#fff" stroke="#000"/>
<g transform="translate(47.5,0)"><path d="M14 13.7 L9.5 9.2 L15.5 11.2Z M22 13.7 L26.5 9.2 L20.5 11.2Z M14 21.7 L9.5 26.2 L15.5 24.2Z M22 21.7 L26.5 26.2 L20.5 24.2Z" fill="url(#th)"/>
<path d="M12 12 L14 14 M24 12 L22 14 M12 24 L14 22 M24 24 L22 22" stroke="#6a5a40" stroke-width="1.6" stroke-opacity=".45"/>
<rect x="14" y="13.7" width="8" height="8" fill="#000"/></g>
<path d="M48 12 V0.8 H59 M71 0.8 H82.5 V12 M48 24 V35.2 H59 M71 35.2 H82.5 V24" fill="none" stroke="#fff" stroke-width="1.1"/>
</svg>
<div class="t" style="left:792px;top:572px;color:#f4f4f4;transform:scaleX(0.7604);transform-origin:0 0">レイヤー</div><div class="t" style="left:834px;top:572px;color:#f4f4f4">0</div>
<!-- bottom bar -->
<div class="a" style="left:668px;top:682px;width:296px;height:1px;background:#333"></div>
<div class="a" style="left:668px;top:683px;width:296px;height:18px;background:#535353;border-top:1px solid #656565"></div>
<svg class="a" style="left:755px;top:684px" width="190" height="17">
<g fill="none" stroke="#a8a8a8" stroke-width="1.8"><rect x="5.5" y="6" width="8" height="6" rx="3"/><rect x="11.5" y="6" width="8" height="6" rx="3"/></g>
<text x="34" y="14" font-family="Liberation Serif" font-style="italic" font-size="15" fill="#cfcfcf">fx</text>
<path d="M48 12.5h3l-1.5 1.5z" fill="#cfcfcf"/>
<rect x="61" y="4" width="14" height="10" fill="#d0d0d0"/><circle cx="68" cy="9" r="2.6" fill="#333"/>
<circle cx="94.5" cy="8.5" r="5.3" fill="#aaa" stroke="#d8d8d8" stroke-width="1.2"/><path d="M91 12 L98 5 A5.3 5.3 0 0 1 91 12Z" fill="#e0e0e0"/>
<path d="M102 13h3l-1.5 1.5z" fill="#cfcfcf"/>
<path d="M114.5 4 H119.5 L121 5.5 H128 V14 H114.5Z" fill="#d4d4d4"/>
<path d="M143 4 H152.5 V14 H146.5 L143 10.5Z" fill="#d4d4d4"/><path d="M143 10.5 H146.5 V14" fill="#535353" stroke="#d4d4d4" stroke-width=".6"/>
<path d="M169 5.5 h12 M173 5.5 v-1.5 h4 v1.5" fill="none" stroke="#d8d8d8" stroke-width="1.3"/>
<path d="M170.5 7 H179.5 L179 14.5 H171Z" fill="none" stroke="#d8d8d8" stroke-width="1.2"/>
<path d="M173.3 8.5v5M175 8.5v5M176.7 8.5v5" stroke="#d8d8d8" stroke-width="1"/>
</svg>


</body></html>
